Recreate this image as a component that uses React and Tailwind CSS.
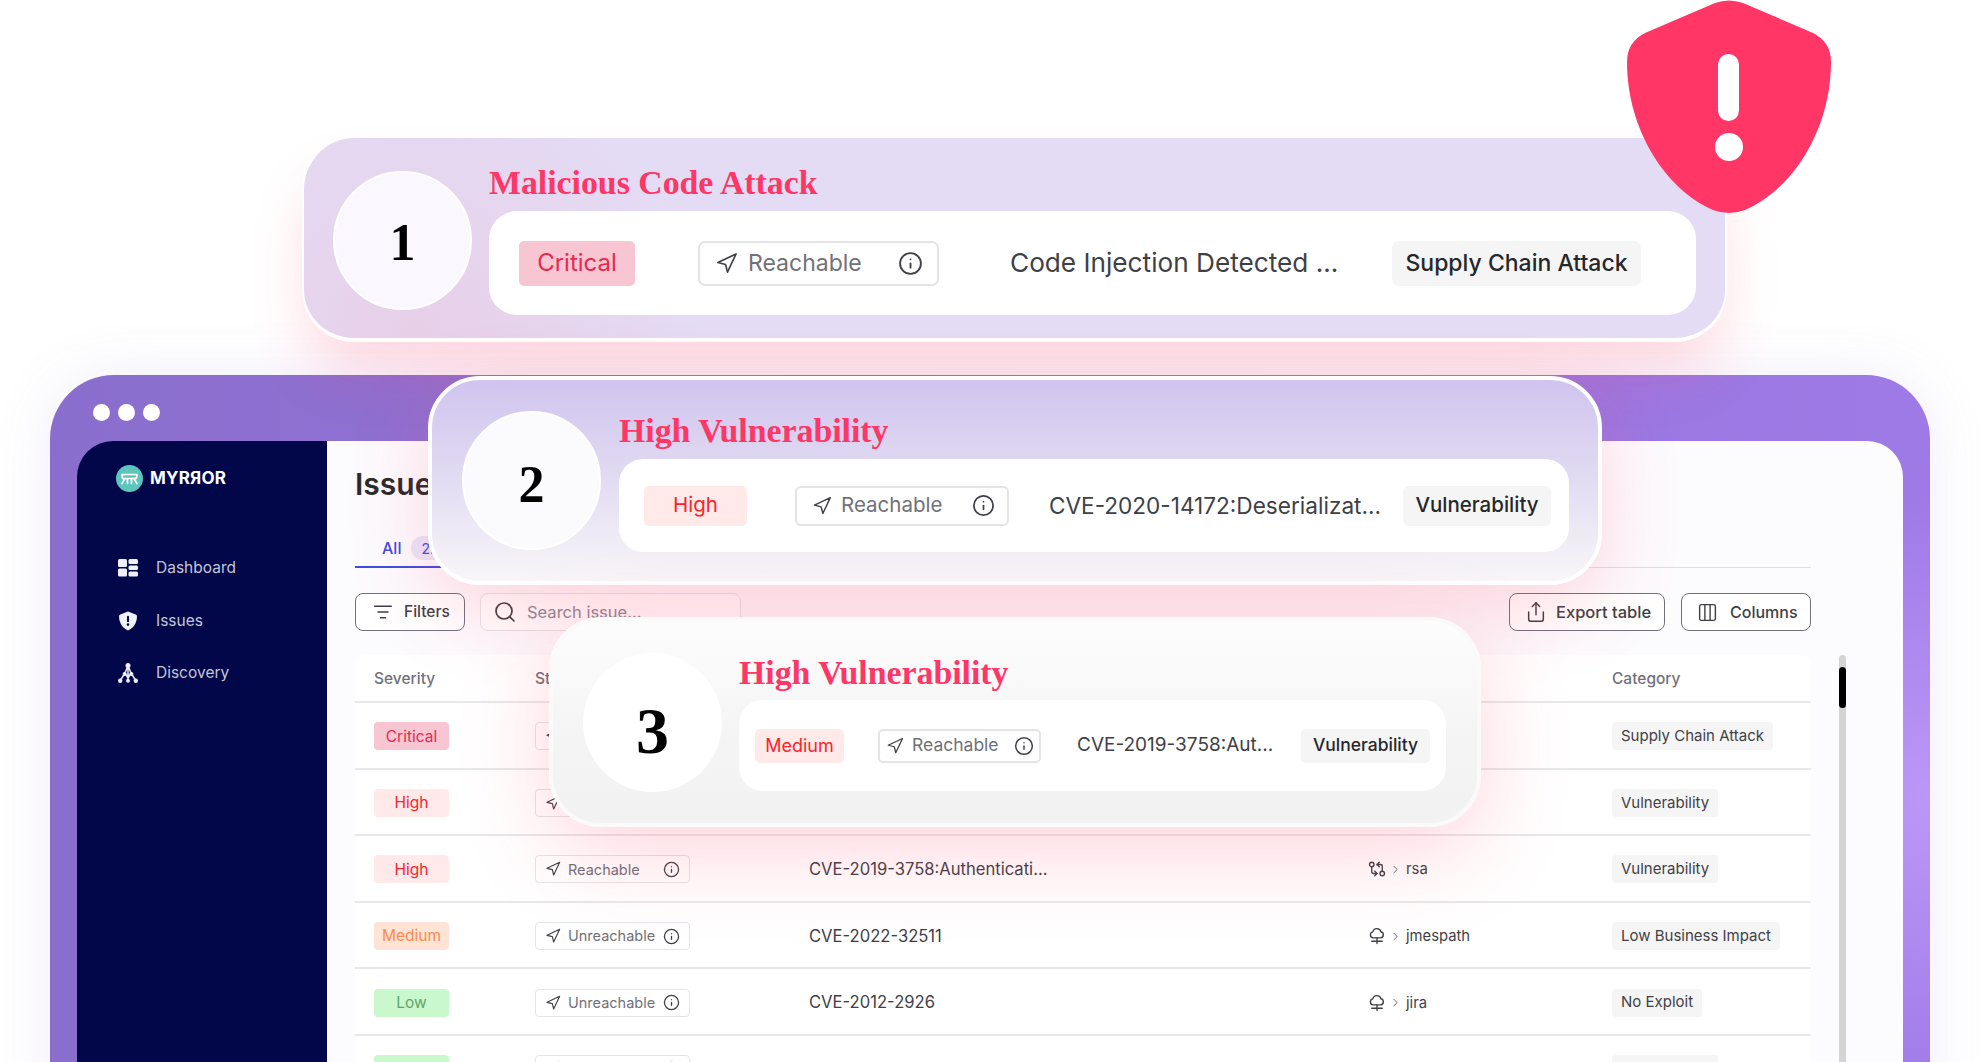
import { ChevronRight, Columns3, GitCompareArrows, Info, ListFilter, Navigation, Search, Share } from 'lucide-react'

// Severity badge colours, shared by the table and the floating cards
const severityStyles = {
  Critical: 'bg-[#f7c6d2] text-[#e8294f]',
  High: 'bg-[#ffe9e9] text-[#f9242c]',
  MediumRed: 'bg-[#ffe9e9] text-[#f9242c]',
  Medium: 'bg-[#ffe4d6] text-[#fb8a4c]',
  Low: 'bg-[#c9f8cd] text-[#5fa56a]',
}

const rows = [
  { severity: 'Critical', status: 'Reachable', issue: 'Code Injection Detected ...', category: 'Supply Chain Attack' },
  { severity: 'High', status: 'Reachable', issue: 'CVE-2020-14172:Deserializat...', category: 'Vulnerability' },
  { severity: 'High', status: 'Reachable', issue: 'CVE-2019-3758:Authenticati...', pkg: 'rsa', pkgIcon: 'git', category: 'Vulnerability' },
  { severity: 'Medium', status: 'Unreachable', issue: 'CVE-2022-32511', pkg: 'jmespath', pkgIcon: 'cloud', category: 'Low Business Impact' },
  { severity: 'Low', status: 'Unreachable', issue: 'CVE-2012-2926', pkg: 'jira', pkgIcon: 'cloud', category: 'No Exploit' },
  { severity: 'Low', status: 'Unreachable', issue: '', category: 'Vulnerability' },
]

function CloudNode({ size = 18 }) {
  return (
    <svg width={size} height={size} viewBox="0 0 24 24" fill="none" stroke="#3f3f46" strokeWidth="1.8" strokeLinecap="round" strokeLinejoin="round">
      <path d="M7 14.5a4 4 0 0 1-.6-7.9 5.6 5.6 0 0 1 10.9-.3 4.2 4.2 0 0 1-.3 8.2Z" />
      <path d="M12 14.5V22M5 19h14" />
    </svg>
  )
}

function ReachPill({ label, pillClass, textClass, navSize, infoSize }) {
  return (
    <div className={`flex items-center bg-white border-[#e4e4e7] ${pillClass}`}>
      <Navigation size={navSize} strokeWidth={1.7} color="#3f3f46" className="shrink-0" />
      <span className={`text-[#71717a] ${textClass}`}>{label}</span>
      <Info size={infoSize} strokeWidth={1.8} color="#3f3f46" className="ml-auto shrink-0" />
    </div>
  )
}

function TableRow({ row }) {
  return (
    <div className="grid h-[66.6px] grid-cols-[161px_274px_559px_244px_1fr] items-center border-b-2 border-[#e8e8ea] pl-[19px] pt-[2px]">
      <div className={`flex h-[28px] w-[75px] items-center justify-center rounded-[4px] text-[15.5px] ${severityStyles[row.severity]}`}>
        {row.severity}
      </div>
      <ReachPill
        label={row.status}
        pillClass="h-[28px] w-[155px] rounded-[4px] border pl-[9px] pr-[9px]"
        textClass="ml-[7px] text-[14.5px]"
        navSize={16}
        infoSize={17}
      />
      <div className="text-[16.6px] text-[#3f3f46]">{row.issue}</div>
      <div className="flex items-center text-[14.8px] text-[#3f3f46]">
        {row.pkgIcon === 'git' && <GitCompareArrows size={18} strokeWidth={1.8} color="#3f3f46" />}
        {row.pkgIcon === 'cloud' && <CloudNode />}
        {row.pkg && <ChevronRight size={13} strokeWidth={1.6} color="#52525b" className="ml-[3px]" />}
        {row.pkg && <span className="ml-[4px]">{row.pkg}</span>}
      </div>
      <div>
        <span className="inline-flex h-[28px] items-center rounded-[4px] bg-[#f5f5f5] px-[9px] text-[15px] text-[#3f3f46]">
          {row.category}
        </span>
      </div>
    </div>
  )
}

function Sidebar() {
  return (
    <aside className="w-[250px] shrink-0 bg-[#02074a] pl-[39px] pt-[24px]">
      <div className="flex items-center">
        <svg width="27" height="27" viewBox="0 0 27 27" fill="none">
          <circle cx="13.5" cy="13.5" r="13.5" fill="#5cc6bd" />
          <path d="M6 9.5h15M9 13.5h9M8 9.5c-2.5 0-2.5 4 0 4M19 9.5c2.5 0 2.5 4 0 4M9 13.5l-3 5M18 13.5l3 5M11.5 13.5v5M15.5 13.5v5" stroke="#fff" strokeWidth="1.7" strokeLinecap="round" />
        </svg>
        <span className="ml-[7px] text-[17px] font-bold tracking-[0.2px] text-white">MYRЯOR</span>
      </div>
      <nav className="mt-[66px] flex flex-col gap-[32.5px] text-[15.5px] text-[#c3c6d8]">
        <div className="flex h-[20px] items-center">
          <svg width="20" height="18" viewBox="0 0 20 18" fill="#eef0fb" className="ml-[2px]">
            <rect x="0" y="0" width="9" height="8" rx="1.5" />
            <rect x="0" y="9.5" width="9" height="8" rx="1.5" />
            <rect x="10.5" y="0" width="9.5" height="5" rx="1.5" />
            <rect x="10.5" y="6.5" width="9.5" height="4.6" rx="1.5" />
            <rect x="10.5" y="12.6" width="9.5" height="4.9" rx="1.5" />
          </svg>
          <span className="ml-[18px]">Dashboard</span>
        </div>
        <div className="flex h-[20px] items-center">
          <svg width="20" height="20" viewBox="0 0 20 20" className="ml-[2px]">
            <path d="M10 0.4 17.8 3.5Q19 4.2 19 5.6C19 12 15 17.6 10 19.6 5 17.6 1 12 1 5.6Q1 4.2 2.2 3.5Z" fill="#eef0fb" />
            <rect x="9" y="4.8" width="2" height="6.4" rx="1" fill="#02074a" />
            <circle cx="10" cy="13.6" r="1.3" fill="#02074a" />
          </svg>
          <span className="ml-[18px]">Issues</span>
        </div>
        <div className="flex h-[20px] items-center">
          <svg width="20" height="20" viewBox="0 0 20 20" fill="none" className="ml-[2px]">
            <path d="M10 2.5V18M10 2.5 7 10 2 18M10 2.5l3 7.5 5 8M7 10l3 5M13 10l-3 5" stroke="#eef0fb" strokeWidth="1.5" />
            <g fill="#eef0fb">
              <circle cx="10" cy="2.6" r="2.5" />
              <circle cx="6.6" cy="11" r="2" />
              <circle cx="13.4" cy="11" r="2" />
              <circle cx="2.2" cy="17.8" r="2.2" />
              <circle cx="17.8" cy="17.8" r="2.2" />
              <circle cx="10" cy="17.8" r="2" />
            </g>
          </svg>
          <span className="ml-[18px]">Discovery</span>
        </div>
      </nav>
    </aside>
  )
}

function MainPanel() {
  return (
    <main className="min-w-0 flex-1 bg-[#fcfbfe] pl-[28px] pr-[57px] pt-[23px]">
      <div className="w-[1456px]">
        <h1 className="h-[40px] text-[30px] font-semibold leading-[40px] text-[#2b2b2b]">Issues</h1>
        <div className="mt-[28px] flex h-[36px] border-b border-[#dedee2]">
          <div className="flex h-[36px] w-[200px] items-start border-b-2 border-[#3d4de0] pl-[27px] pt-[4px]">
            <span className="text-[16px] font-medium text-[#3d4de0]">All</span>
            <span className="ml-[10px] flex h-[24px] items-center rounded-full bg-[#e8e6fa] px-[10px] text-[14px] text-[#3d4de0]">2.4k</span>
          </div>
        </div>
        <div className="mt-[25px] flex h-[38px] items-stretch">
          <button className="flex w-[110px] items-center rounded-[8px] border border-[#71717a] bg-white pl-[17px] text-[15.5px] font-medium text-[#3f3f46]">
            <ListFilter size={20} strokeWidth={1.8} />
            <span className="ml-[11px]">Filters</span>
          </button>
          <div className="ml-[15px] flex w-[261px] items-center rounded-[8px] border border-[#e4e4e7] bg-white pl-[12px] text-[16.5px] text-[#8a8a92]">
            <Search size={24} strokeWidth={1.7} color="#3f3f46" />
            <span className="ml-[10px]">Search issue...</span>
          </div>
          <button className="ml-auto flex w-[156px] items-center rounded-[8px] border border-[#71717a] bg-white pl-[15px] text-[16.5px] font-medium text-[#3f3f46]">
            <Share size={22} strokeWidth={1.6} />
            <span className="ml-[9px]">Export table</span>
          </button>
          <button className="ml-[16px] flex w-[130px] items-center rounded-[8px] border border-[#71717a] bg-white pl-[15px] text-[16px] font-medium text-[#3f3f46]">
            <Columns3 size={21} strokeWidth={1.6} />
            <span className="ml-[12px]">Columns</span>
          </button>
        </div>
      </div>
      <div className="mt-[24px] flex items-start gap-[28px]">
        <div className="w-[1456px] shrink-0 rounded-t-[10px] bg-white">
          <div className="grid h-[48px] grid-cols-[161px_274px_559px_244px_1fr] items-center border-b-2 border-[#e8e8ea] pl-[19px] pt-[2px] text-[15.5px] font-medium text-[#71717a]">
            <div>Severity</div>
            <div>Status</div>
            <div>Issue</div>
            <div>Package</div>
            <div>Category</div>
          </div>
          {rows.map((row, i) => (
            <TableRow key={i} row={row} />
          ))}
        </div>
        <div className="h-[420px] w-[7px] shrink-0 rounded-full bg-[#d4d4d4] pt-[12px]">
          <div className="h-[41px] w-[7px] rounded-full bg-black" />
        </div>
      </div>
    </main>
  )
}

// The three cards that float over the app window
function NumberCircle({ n, circleClass }) {
  return (
    <div className={`flex h-[139px] w-[139px] shrink-0 items-center justify-center rounded-full font-['Liberation_Serif',serif] font-bold text-black ${circleClass}`}>
      {n}
    </div>
  )
}

function FloatingCards() {
  return (
    <>
      <div className="absolute left-[302px] top-[138px] flex h-[204px] w-[1425px] items-center rounded-[52px] border-x-2 border-b-4 border-white bg-[#e4dcf5] bg-[radial-gradient(circle_at_8%_100%,#e8cfe8_0%,transparent_22%)] pl-[29px] pt-[4px] shadow-[0_36px_60px_-8px_rgba(255,60,100,0.2)]">
        <NumberCircle n="1" circleClass="border-2 border-white bg-[#faf8fe] pt-[6px] text-[52px]" />
        <div className="ml-[17px]">
          <div className="h-[36px] font-['Liberation_Serif',serif] text-[33.8px] font-bold leading-[36px] text-[#ff3666]">Malicious Code Attack</div>
          <div className="mt-[10px] flex h-[104px] w-[1207px] items-center rounded-[28px] bg-white pl-[30px]">
            <div className={`flex h-[45px] w-[116px] items-center justify-center rounded-[5px] text-[24px] ${severityStyles.Critical}`}>Critical</div>
            <div className="ml-[63px]">
              <ReachPill label="Reachable" pillClass="h-[45px] w-[241px] rounded-[7px] border-2 pl-[15px] pr-[14px]" textClass="ml-[10px] text-[23px]" navSize={23} infoSize={25} />
            </div>
            <div className="ml-[71px] w-[382px] text-[26.2px] text-[#3f3f46]">Code Injection Detected ...</div>
            <div className="flex h-[45px] w-[249px] items-center justify-center rounded-[7px] bg-[#f5f5f5] text-[23px] font-medium text-[#27272a]">Supply Chain Attack</div>
          </div>
        </div>
      </div>

      <svg width="204" height="213" viewBox="0 0 204 213" className="absolute left-[1627px] top-0">
        <path d="M88 3Q102 -2 116 3L186 33Q204 42 204 62C204 130 165 190 118 210Q102 216 86 210C39 190 0 130 0 62Q0 42 18 33Z" fill="#ff3666" />
        <rect x="91" y="54" width="21" height="67" rx="10.5" fill="#fff" />
        <circle cx="102" cy="147" r="14" fill="#fff" />
      </svg>

      <div className="absolute left-[428px] top-[376px] flex h-[209px] w-[1174px] items-center rounded-[52px] border-4 border-white bg-[linear-gradient(to_bottom,#d0c4ee_0%,#e2dcf2_50%,#f8f6f8_100%)] pl-[30px] shadow-[0_24px_80px_rgba(255,60,100,0.2)]">
        <NumberCircle n="2" circleClass="border-2 border-white bg-[#fbfbfd] pt-[8px] text-[52px]" />
        <div className="ml-[18px] pt-[4px]">
          <div className="h-[36px] font-['Liberation_Serif',serif] text-[33.8px] font-bold leading-[36px] text-[#ff3666]">High Vulnerability</div>
          <div className="mt-[10px] flex h-[93px] w-[950px] items-center rounded-[24px] bg-white pl-[25px]">
            <div className={`flex h-[40px] w-[103px] items-center justify-center rounded-[5px] text-[20.5px] ${severityStyles.High}`}>High</div>
            <div className="ml-[48px]">
              <ReachPill label="Reachable" pillClass="h-[40px] w-[214px] rounded-[6px] border-2 pl-[15px] pr-[12px]" textClass="ml-[9px] text-[20.5px]" navSize={20} infoSize={23} />
            </div>
            <div className="ml-[40px] w-[354px] text-[22.6px] text-[#3f3f46]">CVE-2020-14172:Deserializat...</div>
            <div className="flex h-[40px] w-[148px] items-center justify-center rounded-[6px] bg-[#f5f5f5] text-[20.5px] font-medium text-[#27272a]">Vulnerability</div>
          </div>
        </div>
      </div>

      <div className="absolute left-[549px] top-[617px] flex h-[210px] w-[932px] items-center rounded-[52px] border-4 border-[#fafafa] bg-[linear-gradient(to_bottom,#fdfdfd_0%,#f4f4f4_60%,#f2f2f2_100%)] pl-[30px] shadow-[0_24px_90px_rgba(255,60,100,0.22)]">
        <NumberCircle n="3" circleClass="bg-white pt-[17px] text-[66px]" />
        <div className="ml-[17px] pt-[2px]">
          <div className="h-[36px] font-['Liberation_Serif',serif] text-[33.8px] font-bold leading-[36px] text-[#ff3666]">High Vulnerability</div>
          <div className="mt-[9px] flex h-[91px] w-[707px] items-center rounded-[24px] bg-white pl-[16px]">
            <div className={`flex h-[34px] w-[89px] items-center justify-center rounded-[5px] text-[18px] ${severityStyles.MediumRed}`}>Medium</div>
            <div className="ml-[34px]">
              <ReachPill label="Reachable" pillClass="h-[34px] w-[163px] rounded-[5px] border-2 pl-[6px] pr-[5px]" textClass="ml-[8px] text-[17.5px]" navSize={18} infoSize={20} />
            </div>
            <div className="ml-[36px] w-[224px] text-[19px] text-[#3f3f46]">CVE-2019-3758:Aut...</div>
            <div className="flex h-[34px] w-[129px] items-center justify-center rounded-[5px] bg-[#f5f5f5] text-[17.5px] font-medium text-[#27272a]">Vulnerability</div>
          </div>
        </div>
      </div>
    </>
  )
}

export default function App() {
  return (
    <div className="relative h-[1062px] w-[1980px] overflow-hidden bg-white pt-[375px] font-[Inter,sans-serif]">
      <div className="ml-[50px] h-[900px] w-[1880px] rounded-t-[64px] bg-[radial-gradient(circle_at_100%_47%,#bd97f7_0,transparent_300px),linear-gradient(90deg,#8a6ecd,#9e7ae6)] px-[27px] pt-[29px] shadow-[0_0_60px_rgba(139,110,205,0.12)]">
        <div className="ml-[16px] flex h-[17px] gap-[8px]">
          <span className="h-[17px] w-[17px] rounded-full bg-white" />
          <span className="h-[17px] w-[17px] rounded-full bg-white" />
          <span className="h-[17px] w-[17px] rounded-full bg-white" />
        </div>
        <div className="mt-[20px] flex h-[800px] overflow-hidden rounded-t-[36px]">
          <Sidebar />
          <MainPanel />
        </div>
      </div>
      <FloatingCards />
    </div>
  )
}
